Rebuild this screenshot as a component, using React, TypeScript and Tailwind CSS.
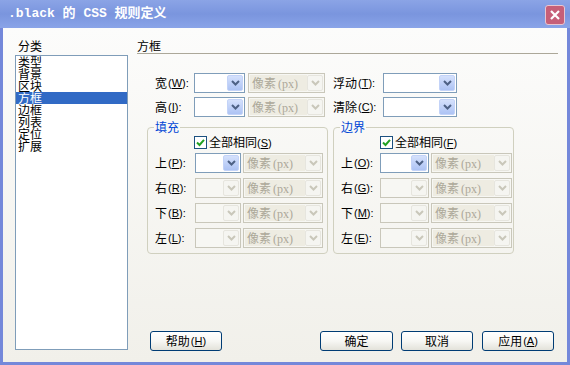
import React from "react";

const CJK = "'Noto Sans CJK SC', 'Noto Sans', sans-serif";

function Chevron({ color }: { color: string }) {
  return (
    <svg width="9" height="6" viewBox="0 0 9 6">
      <path d="M1 1 L4.5 4.5 L8 1" stroke={color} strokeWidth="2" fill="none" />
    </svg>
  );
}

function Combo({ w, enabled, text }: { w: string; enabled?: boolean; text?: string }) {
  if (enabled) {
    return (
      <div className={`${w} h-[20px] border border-[#7F9DB9] bg-white flex justify-end p-[1px] shrink-0`}>
        <div className="w-[16px] h-full rounded-[2px] bg-gradient-to-b from-[#D5E1FC] to-[#ADC3F4] border border-[#C3D3F8] flex items-center justify-center">
          <Chevron color="#4D6185" />
        </div>
      </div>
    );
  }
  return (
    <div className={`${w} h-[20px] border border-[#C9C7BA] bg-[#F7F7F3] flex p-[1px] shrink-0`}>
      <div className={`flex-1 h-full flex items-center pl-[2px] ${text ? "bg-[#EEECE2]" : ""}`}>
        {text ? (
          <div className="flex items-baseline text-[#ACA899] whitespace-nowrap">
            <span className="text-[12px] leading-[14px]" style={{ fontFamily: CJK }}>
              像素
            </span>
            <span className="text-[12px] leading-[14px] ml-[2px]" style={{ fontFamily: "'Liberation Serif', serif" }}>
              (px)
            </span>
          </div>
        ) : null}
      </div>
      <div className="w-[16px] h-full rounded-[2px] bg-[#F5F5F1] border border-[#E6E5DE] flex items-center justify-center">
        <Chevron color="#C9C7BA" />
      </div>
    </div>
  );
}

function Lbl({ ch, k, w }: { ch: string; k: string; w: string }) {
  return (
    <div
      className={`${w} h-[20px] shrink-0 flex items-center text-[12px] leading-[14px] text-black whitespace-nowrap overflow-hidden`}
      style={{ fontFamily: CJK }}
    >
      <span>{ch}</span>
      <span className="text-[11px] leading-[14px] ml-[1px]" style={{ fontFamily: "'Liberation Sans', sans-serif" }}>
        (<u>{k}</u>):
      </span>
    </div>
  );
}

function Check() {
  return (
    <div className="w-[13px] h-[13px] border border-[#1C5180] bg-white flex items-center justify-center shrink-0">
      <svg width="9" height="9" viewBox="0 0 9 9">
        <path d="M1 4.5 L3.5 7 L8 1.8" stroke="#21A121" strokeWidth="2" fill="none" />
      </svg>
    </div>
  );
}

function Group({
  title,
  chk,
  rows,
  lw,
  cw,
  uw,
}: {
  title: string;
  chk: string;
  rows: [string, string][];
  lw: string;
  cw: string;
  uw: string;
}) {
  return (
    <fieldset className="w-[181px] border border-[#D0D0BF] rounded-[4px] pb-[5px] shrink-0">
      <legend className="ml-[6px] px-[1px] text-[12px] leading-[12px] text-[#0046D5]" style={{ fontFamily: CJK }}>
        {title}
      </legend>
      <div className="flex items-center pl-[46px] mt-[3px] h-[13px]">
        <Check />
        <span className="ml-[2px] text-[12px] leading-[13px] text-black whitespace-nowrap" style={{ fontFamily: CJK }}>
          全部相同
          <span className="text-[11px]" style={{ fontFamily: "'Liberation Sans', sans-serif" }}>
            (<u>{chk}</u>)
          </span>
        </span>
      </div>
      <div className="flex flex-col gap-[5px] mt-[4px] pl-[7px]">
        {rows.map(([c, k], i) => (
          <div key={c} className="flex items-center h-[20px]">
            <Lbl ch={c} k={k} w={lw} />
            <Combo w={cw} enabled={i === 0} />
            <div className="ml-[2px]">
              <Combo w={uw} text="px" />
            </div>
          </div>
        ))}
      </div>
    </fieldset>
  );
}

function Btn({ w, children, cls }: { w: string; children: React.ReactNode; cls?: string }) {
  return (
    <div
      className={`${w} ${cls ?? ""} h-[20px] rounded-[3px] border border-[#003C74] bg-gradient-to-b from-white via-[#F7F7F4] to-[#E3E2DA] flex items-center justify-center text-[12px] leading-[14px] text-black shrink-0`}
      style={{ fontFamily: CJK }}
    >
      {children}
    </div>
  );
}

export default function App() {
  const items = ["类型", "背景", "区块", "方框", "边框", "列表", "定位", "扩展"];
  return (
    <div className="w-[570px] h-[365px] flex flex-col bg-[#7488DA] overflow-hidden">
      <div className="h-[28px] flex items-start bg-gradient-to-b from-[#8BA4E6] via-[#7A95DE] to-[#8AA4E8] shrink-0">
        <div
          className="pl-[8px] flex-1 text-white font-bold text-[13px] leading-[28px] whitespace-pre"
          style={{ fontFamily: "'Liberation Mono', 'Noto Sans CJK SC', monospace" }}
        >
          .black 的 CSS 规则定义
        </div>
        <div className="w-[20px] h-[20px] mt-[5px] mr-[5px] rounded-[3px] bg-[#C65F78] border border-[#E8C6D0] flex items-center justify-center">
          <svg width="12" height="12" viewBox="0 0 12 12">
            <path d="M2 2 L10 10 M10 2 L2 10" stroke="white" strokeWidth="2.2" />
          </svg>
        </div>
      </div>
      <div className="flex-1 mx-[3px] mb-[3px] flex bg-gradient-to-b from-[#FCFCFB] to-[#F1F0EA]">
        <div className="ml-[12px] w-[113px] flex flex-col pt-[10px]">
          <div className="h-[16px] text-[12px] leading-[16px] text-black pl-[3px]" style={{ fontFamily: CJK }}>
            分类
          </div>
          <div className="mt-[1px] h-[295px] border border-[#7F9DB9] bg-white flex flex-col">
            {items.map((it) => (
              <div
                key={it}
                className={`h-[12px] text-[12px] leading-[12px] pl-[2px] ${
                  it === "方框" ? "bg-[#316AC5] text-white" : "text-black"
                }`}
                style={{ fontFamily: CJK }}
              >
                {it}
              </div>
            ))}
          </div>
        </div>
        <div className="ml-[9px] w-[421px] flex flex-col pt-[10px]">
          <div className="h-[16px] border-b border-[#ACA899] text-[12px] leading-[15px] text-black" style={{ fontFamily: CJK }}>
            方框
          </div>
          <div className="mt-[19px] flex flex-col gap-[4px] pl-[18px]">
            <div className="flex items-center h-[20px]">
              <Lbl ch="宽" k="W" w="w-[39px]" />
              <Combo w="w-[51px]" enabled />
              <div className="ml-[3px]">
                <Combo w="w-[77px]" text="px" />
              </div>
              <div className="ml-[8px]">
                <Lbl ch="浮动" k="T" w="w-[50px]" />
              </div>
              <Combo w="w-[74px]" enabled />
            </div>
            <div className="flex items-center h-[20px]">
              <Lbl ch="高" k="I" w="w-[39px]" />
              <Combo w="w-[51px]" enabled />
              <div className="ml-[3px]">
                <Combo w="w-[77px]" text="px" />
              </div>
              <div className="ml-[8px]">
                <Lbl ch="清除" k="C" w="w-[50px]" />
              </div>
              <Combo w="w-[74px]" enabled />
            </div>
          </div>
          <div className="mt-[4px] pl-[10px] flex gap-[5px]">
            <Group
              title="填充"
              chk="S"
              rows={[
                ["上", "P"],
                ["右", "R"],
                ["下", "B"],
                ["左", "L"],
              ]}
              lw="w-[40px]"
              cw="w-[46px]"
              uw="w-[80px]"
            />
            <Group
              title="边界"
              chk="F"
              rows={[
                ["上", "O"],
                ["右", "G"],
                ["下", "M"],
                ["左", "E"],
              ]}
              lw="w-[39px]"
              cw="w-[49px]"
              uw="w-[81px]"
            />
          </div>
          <div className="mt-auto mb-[11px] flex pl-[13px]">
            <Btn w="w-[72px]">
              帮助
              <span className="text-[11px] ml-[1px]" style={{ fontFamily: "'Liberation Sans', sans-serif" }}>
                (<u>H</u>)
              </span>
            </Btn>
            <Btn w="w-[73px]" cls="ml-[98px]">
              确定
            </Btn>
            <Btn w="w-[72px]" cls="ml-[8px]">
              取消
            </Btn>
            <Btn w="w-[72px]" cls="ml-[9px]">
              应用
              <span className="text-[11px] ml-[1px]" style={{ fontFamily: "'Liberation Sans', sans-serif" }}>
                (<u>A</u>)
              </span>
            </Btn>
          </div>
        </div>
      </div>
    </div>
  );
}
